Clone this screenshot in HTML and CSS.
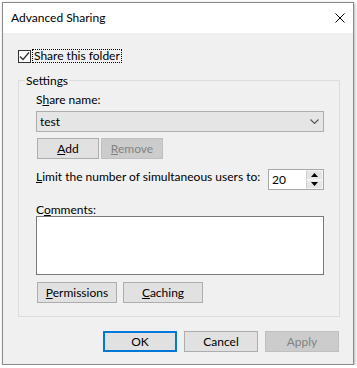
FILE: index.html
```html
<!DOCTYPE html>
<html>
<head>
<meta charset="utf-8">
<link rel="stylesheet" href="styles.css">
</head>
<body>
<div class="window">
  <div class="titlebar">
    <span class="title">Advanced Sharing</span>
    <svg class="close" width="10" height="10" viewBox="0 0 10 10"><path d="M0.5 0.5 L9.5 9.5 M9.5 0.5 L0.5 9.5" stroke="#000" stroke-width="1" fill="none"/></svg>
  </div>
  <div class="content">
    <div class="check-row">
      <span class="checkbox"><svg width="11" height="11" viewBox="0 0 11 11"><path d="M1 5.5 L4 8.5 L10 1.5" stroke="#333" stroke-width="1.3" fill="none"/></svg></span>
      <span class="focus">Share this folder</span>
    </div>
    <fieldset class="group">
      <legend class="legend">Settings</legend>
      <div class="group-body">
        <div class="label">S<u>h</u>are name:</div>
        <div class="combo">
          <span>test</span>
          <svg width="9" height="5" viewBox="0 0 9 5"><path d="M0.5 0.5 L4.5 4.5 L8.5 0.5" stroke="#555" stroke-width="1.1" fill="none"/></svg>
        </div>
        <div class="btn-row">
          <button class="btn small"><u>A</u>dd</button>
          <button class="btn small disabled"><u>R</u>emove</button>
        </div>
        <div class="limit-row">
          <span class="limit-label"><u>L</u>imit the number of simultaneous users to:</span>
          <div class="spin">
            <span class="spin-val">20</span>
            <div class="spin-btns">
              <span class="spin-btn"><svg width="7" height="4" viewBox="0 0 7 4"><path d="M0 4 L3.5 0 L7 4 Z" fill="#000"/></svg></span>
              <span class="spin-btn"><svg width="7" height="4" viewBox="0 0 7 4"><path d="M0 0 L3.5 4 L7 0 Z" fill="#000"/></svg></span>
            </div>
          </div>
        </div>
        <div class="label comments">C<u>o</u>mments:</div>
        <div class="textarea"></div>
        <div class="btn-row wide">
          <button class="btn mid"><u>P</u>ermissions</button>
          <button class="btn mid"><u>C</u>aching</button>
        </div>
      </div>
    </fieldset>
    <div class="footer">
      <button class="btn foot default">OK</button>
      <button class="btn foot">Cancel</button>
      <button class="btn foot disabled">Apply</button>
    </div>
  </div>
</div>
</body>
</html>
```
FILE: styles.css
```css
* { box-sizing: border-box; }
body {
  margin: 0;
  background: #ffffff;
  font-family: Lato, "Noto Sans", sans-serif;
  font-size: 12px;
  color: #000;
}
u { text-underline-offset: 1px; }
.window {
  margin: 2px 0 0 2px;
  width: 352px;
  height: 363px;
  border: 1px solid #8a8a8a;
  box-shadow: 1px 1px 3px rgba(0,0,0,0.3);
  background: #f0f0f0;
  display: flex;
  flex-direction: column;
}
.titlebar {
  height: 30px;
  flex: none;
  background: #fff;
  display: flex;
  align-items: center;
  justify-content: space-between;
  padding: 0 8px 1px 8px;
}
.title { line-height: 15px; }
.close { display: block; }
.content {
  flex: 1;
  display: flex;
  flex-direction: column;
  padding: 16px 13px 12px 15px;
}
.check-row {
  display: flex;
  align-items: center;
  height: 14px;
}
.checkbox {
  width: 13px;
  height: 13px;
  border: 1px solid #333;
  background: #fff;
  margin-right: 1px;
  display: flex;
  align-items: center;
  justify-content: center;
}
.checkbox svg { display: block; }
.focus {
  border: 1px dotted #000;
  height: 14px;
  line-height: 12px;
  padding: 0 1px;
}
.group {
  margin: 10px 0 0 0;
  padding: 0;
  border: 1px solid #dcdcdc;
  min-width: 0;
}
.legend {
  margin-left: 6px;
  padding: 0 1px;
  line-height: 15px;
}
.group-body {
  padding: 4px 15px 13px 17px;
}
.label { line-height: 15px; height: 15px; }
.combo {
  margin-top: 4px;
  height: 21px;
  border: 1px solid #adadad;
  background: #e5e5e5;
  display: flex;
  align-items: center;
  justify-content: space-between;
  padding: 0 4px 0 3px;
}
.combo svg { display: block; }
.btn-row {
  display: flex;
  gap: 2px;
  margin-top: 6px;
  padding-left: 1px;
}
.btn {
  font-family: inherit;
  font-size: 12px;
  color: #000;
  background: #e1e1e1;
  border: 1px solid #adadad;
  height: 21px;
  padding: 0;
  margin: 0;
  line-height: 15px;
  text-align: center;
}
.btn.disabled {
  background: #cccccc;
  border-color: #bfbfbf;
  color: #838383;
}
.btn.small { width: 62px; }
.btn.mid { width: 80px; }
.btn-row.wide { gap: 6px; margin-top: 7px; }
.limit-row {
  margin-top: 10px;
  display: flex;
  justify-content: space-between;
  align-items: flex-start;
}
.limit-label { line-height: 15px; white-space: nowrap; }
.spin {
  width: 56px;
  height: 21px;
  border: 1px solid #a8a8a8;
  background: #fff;
  display: flex;
  flex: none;
}
.spin-val {
  flex: 1;
  padding-left: 3px;
  line-height: 19px;
}
.spin-btns {
  width: 17px;
  display: flex;
  flex-direction: column;
}
.spin-btn {
  flex: 1;
  background: #e5e5e5;
  border: 1px solid #f4f4f4;
  border-left-color: #d0d0d0;
  display: flex;
  align-items: center;
  justify-content: center;
}
.spin-btn svg { display: block; }
.comments { margin-top: 12px; }
.textarea {
  margin-top: -1px;
  height: 59px;
  border: 1px solid #7a7a7a;
  background: #fff;
}
.footer {
  display: flex;
  justify-content: flex-end;
  gap: 7px;
  margin-top: auto;
  padding-right: 1px;
}
.btn.foot { width: 74px; }
.btn.default { border: 2px solid #0078d7; }
```
